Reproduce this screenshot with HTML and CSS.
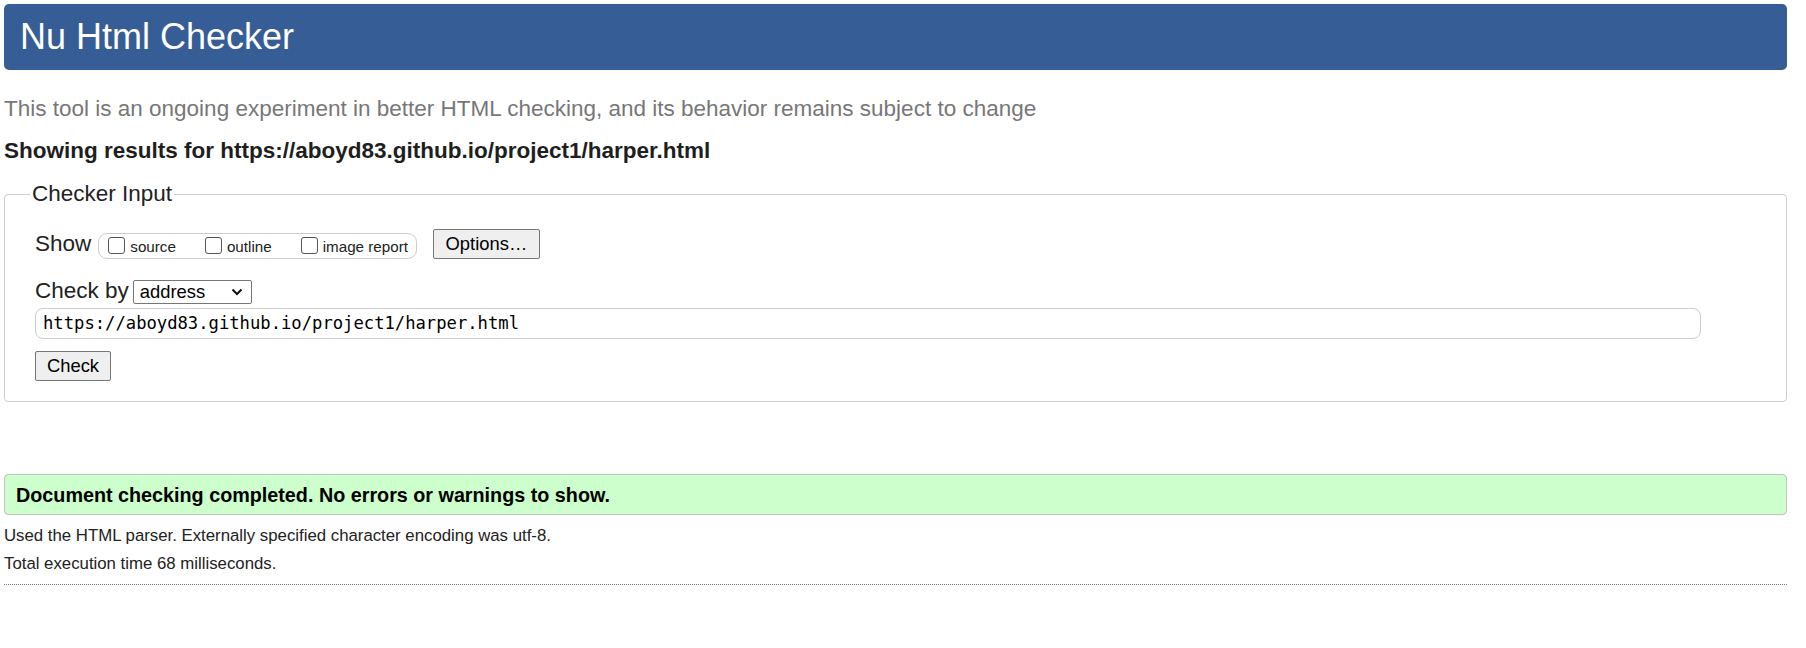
FILE: index.html
```html
<!DOCTYPE html>
<html lang="en">
<head>
<meta charset="utf-8">
<title>Showing results for https://aboyd83.github.io/project1/harper.html - Nu Html Checker</title>
<link rel="stylesheet" href="styles.css">
</head>
<body>
<h1 class="title">Nu Html Checker</h1>
<p class="subtitle">This tool is an ongoing experiment in better HTML checking, and its behavior remains subject to change</p>
<p class="showing">Showing results for https://aboyd83.github.io/project1/harper.html</p>
<form class="checker">
  <fieldset class="fs">
    <legend class="legend">Checker Input</legend>
    <div class="row show-row">
      <span class="label">Show</span>
      <span class="group">
        <label class="opt"><input type="checkbox" class="cb"><span>source</span></label>
        <label class="opt"><input type="checkbox" class="cb"><span>outline</span></label>
        <label class="opt"><input type="checkbox" class="cb"><span>image report</span></label>
      </span>
      <button type="button" class="btn options">Options…</button>
    </div>
    <div class="row by-row">
      <span class="label">Check by</span>
      <span class="select">address<svg class="chev" width="12" height="8" viewBox="0 0 12 8"><path d="M1.5 1.5 L6 6 L10.5 1.5" fill="none" stroke="#111" stroke-width="2"/></svg></span>
    </div>
    <div class="url">https://aboyd83.github.io/project1/harper.html</div>
    <button type="button" class="btn check">Check</button>
  </fieldset>
</form>
<div class="success">Document checking completed. No errors or warnings to show.</div>
<div class="info">
  <p class="line">Used the HTML parser. Externally specified character encoding was utf-8.</p>
  <p class="line">Total execution time 68 milliseconds.</p>
</div>
<hr class="rule">
</body>
</html>
```
FILE: styles.css
```css
html, body {
  background: #fff;
}
body {
  margin: 4px 19px 4px 4px;
  font-family: "Liberation Sans", Arial, sans-serif;
  color: #222;
  font-size: 22.5px;
}
.title {
  margin: 0;
  background: #365d95;
  color: #fff;
  font-size: 36px;
  font-weight: normal;
  line-height: 41.4px;
  padding: 12px 14px 13px 16px;
  border-radius: 5px;
}
.subtitle {
  margin: 26px 0 0;
  color: #777;
  line-height: 26px;
}
.showing {
  margin: 16px 0 0;
  font-weight: bold;
  line-height: 26px;
  color: #1e1e1e;
}
.checker {
  margin: 17px 0 0;
}
.fs {
  margin: 0;
  border: 1px solid #ccc;
  border-radius: 4px;
  padding: 22px 20px 20px 30px;
}
.legend {
  padding: 0 2px;
  margin-left: -5px;
  line-height: 26px;
}
.row {
  display: flex;
  align-items: center;
}
.show-row {
  height: 30px;
}
.label {
  line-height: 26px;
}
.group {
  display: inline-flex;
  align-items: center;
  gap: 29px;
  height: 24px;
  border: 1px solid #ccc;
  border-radius: 9px;
  margin-left: 7px;
  padding: 0 8px 0 9px;
  font-size: 15.2px;
  margin-top: 4px;
}
.opt {
  display: inline-flex;
  align-items: center;
  gap: 5px;
  padding-top: 1px;
}
.cb {
  width: 17px;
  height: 17px;
  margin: -3px 0 0 0;
  appearance: none;
  border: 1px solid #555;
  border-radius: 3px;
  background: #fff;
}
.btn {
  font-family: "Liberation Sans", Arial, sans-serif;
  font-size: 18.4px;
  color: #000;
  background: #efefef;
  border: 1px solid #767676;
  border-radius: 2px;
  height: 30px;
  padding: 0 8px;
}
.options {
  margin-left: 16px;
  width: 107px;
}
.by-row {
  margin-top: 19px;
  height: 26px;
}
.select {
  display: inline-flex;
  align-items: center;
  justify-content: space-between;
  box-sizing: border-box;
  width: 119px;
  height: 24px;
  margin-left: 4px;
  margin-top: 2px;
  padding: 0 8px 0 6px;
  border: 1px solid #767676;
  border-radius: 2px;
  font-size: 18.4px;
  color: #000;
  background: #fff;
}
.chev {
  display: block;
}
.url {
  margin-top: 4px;
  box-sizing: border-box;
  width: 1666px;
  height: 31px;
  line-height: 29px;
  border: 1px solid #ccc;
  border-radius: 8px;
  padding: 0 7px;
  font-family: "DejaVu Sans Mono", "Liberation Mono", monospace;
  font-size: 17.2px;
  color: #000;
}
.check {
  margin-top: 12px;
  width: 76px;
  display: block;
}
.success {
  margin-top: 72px;
  background: #ccffcc;
  border: 1px solid #c4c4c4;
  border-radius: 5px;
  box-shadow: 0 0 1px #bbb;
  font-weight: bold;
  font-size: 19.75px;
  line-height: 22.4px;
  padding: 8.3px 11px;
  color: #000;
}
.info {
  margin-top: 6.5px;
}
.line {
  margin: 0;
  font-size: 16.8px;
  line-height: 28px;
  color: #222;
}
.rule {
  margin: 6px 0 0;
  border: 0;
  border-top: 1px dotted #777;
  height: 0;
}
```
